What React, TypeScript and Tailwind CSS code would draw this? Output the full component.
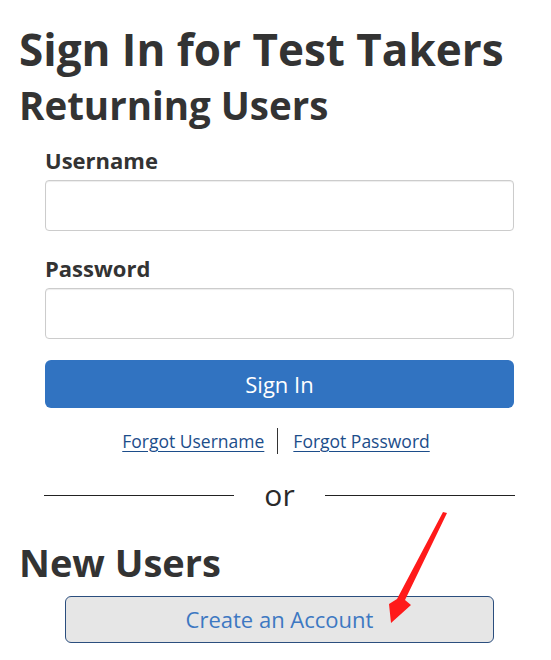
import React from "react";

export default function App() {
  return (
    <div
      className="relative w-[551px] h-[660px] bg-white overflow-hidden text-[#333333]"
      style={{ fontFamily: '"Open Sans", "Liberation Sans", sans-serif' }}
    >
      <div className="pl-[19px] pt-[25px]">
        <h1 className="text-[44px] leading-[48px] font-bold">Sign In for Test Takers</h1>
        <h2 className="mt-[10px] text-[38.5px] leading-[44px] font-bold">Returning Users</h2>
      </div>
      <div className="ml-[45px] w-[469px] mt-[18px]">
        <label className="block text-[22px] leading-[30px] font-bold">Username</label>
        <input
          type="text"
          className="mt-[5px] block w-full h-[51px] rounded-[4px] border border-[#cccccc] shadow-[inset_0_1px_1px_rgba(0,0,0,0.075)] outline-none"
        />
        <label className="mt-[22px] block text-[22px] leading-[30px] font-bold">Password</label>
        <input
          type="password"
          className="mt-[5px] block w-full h-[51px] rounded-[4px] border border-[#cccccc] shadow-[inset_0_1px_1px_rgba(0,0,0,0.075)] outline-none"
        />
        <button className="mt-[21px] block w-full h-[48px] rounded-[6px] bg-[#3173c1] text-white text-[22px]">
          Sign In
        </button>
        <div className="mt-[20px] pr-[7px] flex justify-center items-center text-[17.5px] leading-[24px]">
          <a href="#" className="text-[#1c4d8a] underline underline-offset-[3px]">Forgot Username</a>
          <span className="ml-[13px] mr-[15px] w-px h-[26px] bg-[#333333]" />
          <a href="#" className="text-[#1c4d8a] underline underline-offset-[3px]">Forgot Password</a>
        </div>
      </div>
      <div className="mt-[21px] ml-[44px] w-[471px] flex items-center">
        <div className="flex-1 h-px bg-[#222222]" />
        <span className="px-[30px] text-[30px] leading-[40px] text-[#2a2a2a]">or</span>
        <div className="flex-1 h-px bg-[#222222]" />
      </div>
      <div className="pl-[19px] mt-[25px]">
        <h2 className="text-[38px] leading-[44px] font-bold">New Users</h2>
      </div>
      <div className="ml-[65px] w-[429px] mt-[12px]">
        <button className="block w-full h-[47px] rounded-[6px] bg-[#e6e6e6] border border-[#2b4e7e] text-[#3d78c2] text-[22px]">
          Create an Account
        </button>
      </div>
      <svg className="absolute left-0 top-0 pointer-events-none" width="551" height="660" viewBox="0 0 551 660">
        <path d="M447 513 L405 600 L411 605 L391 623 L389 604 L397 599 L443 512 Z" fill="#ff1a1a" />
      </svg>
    </div>
  );
}
